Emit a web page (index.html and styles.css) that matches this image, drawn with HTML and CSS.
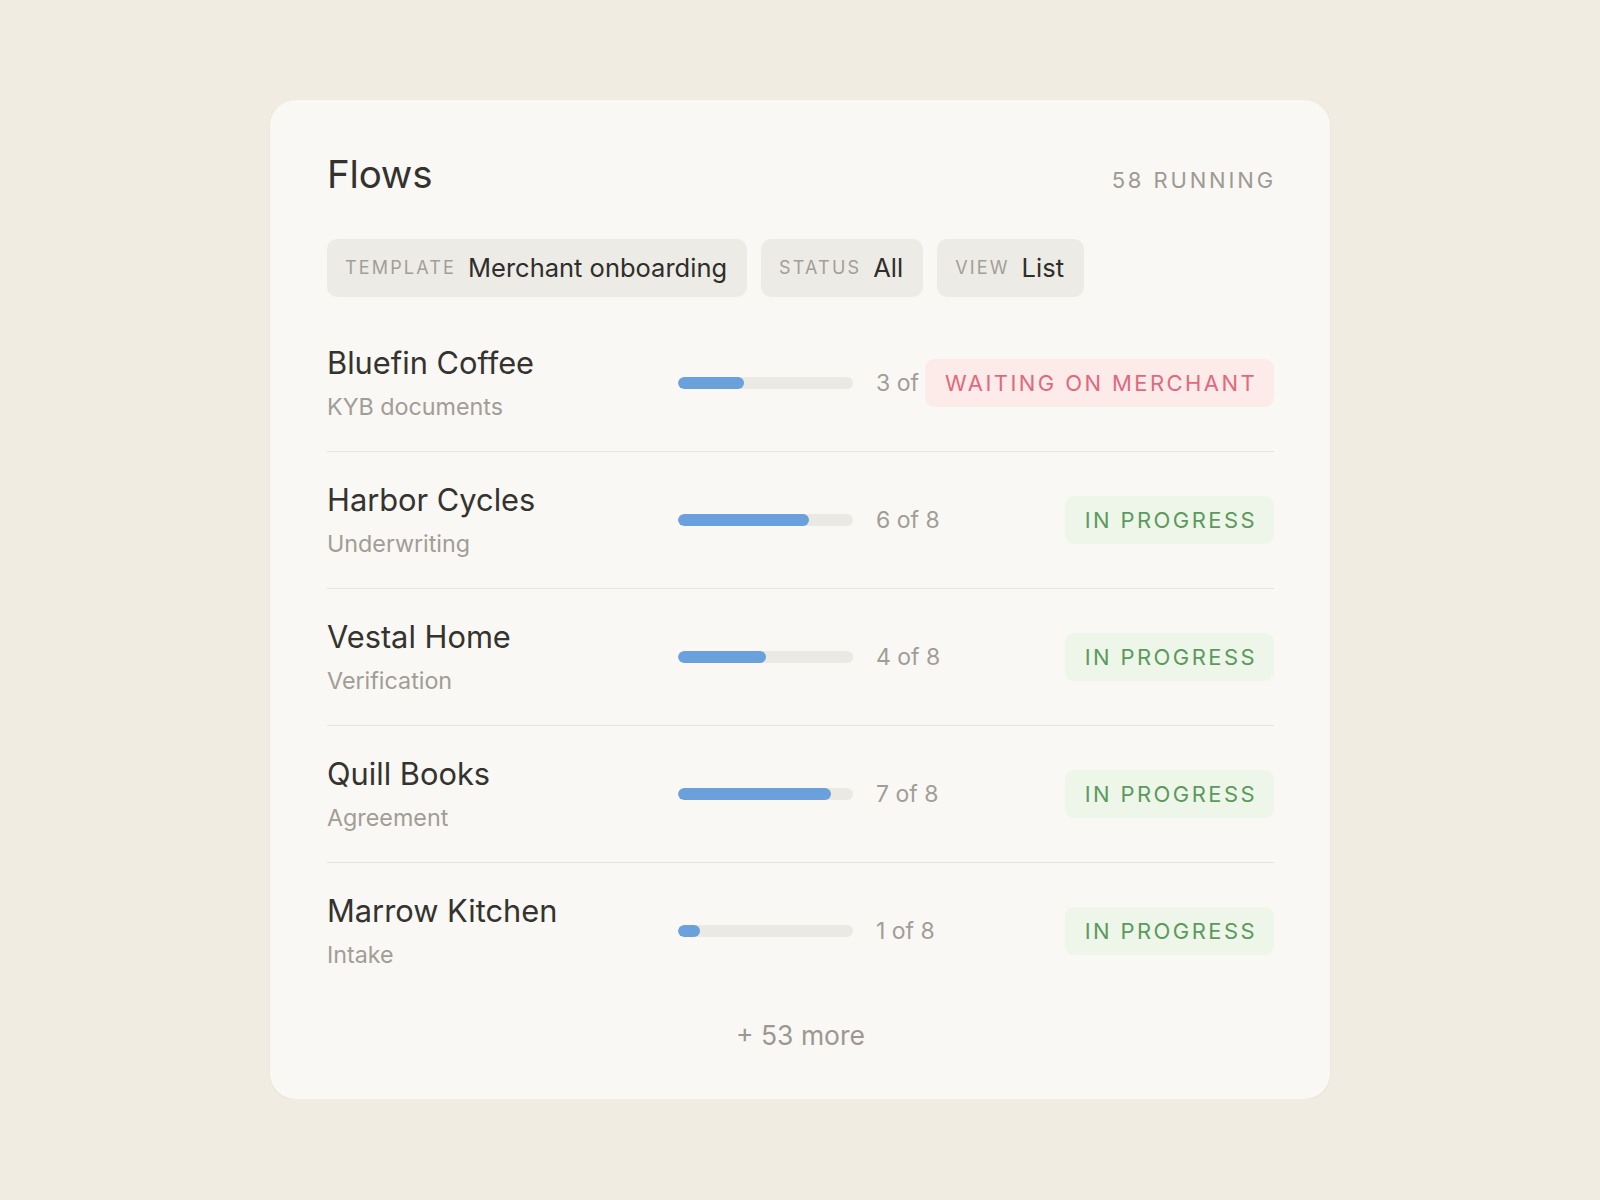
FILE: index.html
```html
<!DOCTYPE html>
<html lang="en">
<head>
    <meta charset="UTF-8">
    <meta name="viewport" content="width=device-width, initial-scale=1.0">
    <title>Flows</title>
    <link rel="stylesheet" href="styles.css">
</head>
<body>

    <div class="card">
        <div class="card-header">
            <h1 class="title">Flows</h1>
            <span class="running">58 running</span>
        </div>

        <!-- Filters -->
        <div class="filters">
            <div class="chip"><span class="chip-label">Template</span><span class="chip-value">Merchant onboarding</span></div>
            <div class="chip"><span class="chip-label">Status</span><span class="chip-value">All</span></div>
            <div class="chip"><span class="chip-label">View</span><span class="chip-value">List</span></div>
        </div>

        <!-- Flow rows -->
        <div class="flow-list">
            <div class="flow-row">
                <div class="flow-name">
                    <div class="merchant">Bluefin Coffee</div>
                    <div class="step">KYB documents</div>
                </div>
                <div class="progress"><div class="progress-fill" style="width: 37.5%"></div></div>
                <div class="count">3 of 8</div>
                <span class="badge badge-waiting">Waiting on merchant</span>
            </div>

            <div class="flow-row">
                <div class="flow-name">
                    <div class="merchant">Harbor Cycles</div>
                    <div class="step">Underwriting</div>
                </div>
                <div class="progress"><div class="progress-fill" style="width: 75%"></div></div>
                <div class="count">6 of 8</div>
                <span class="badge badge-progress">In progress</span>
            </div>

            <div class="flow-row">
                <div class="flow-name">
                    <div class="merchant">Vestal Home</div>
                    <div class="step">Verification</div>
                </div>
                <div class="progress"><div class="progress-fill" style="width: 50%"></div></div>
                <div class="count">4 of 8</div>
                <span class="badge badge-progress">In progress</span>
            </div>

            <div class="flow-row">
                <div class="flow-name">
                    <div class="merchant">Quill Books</div>
                    <div class="step">Agreement</div>
                </div>
                <div class="progress"><div class="progress-fill" style="width: 87.5%"></div></div>
                <div class="count">7 of 8</div>
                <span class="badge badge-progress">In progress</span>
            </div>

            <div class="flow-row">
                <div class="flow-name">
                    <div class="merchant">Marrow Kitchen</div>
                    <div class="step">Intake</div>
                </div>
                <div class="progress"><div class="progress-fill" style="width: 12.5%"></div></div>
                <div class="count">1 of 8</div>
                <span class="badge badge-progress">In progress</span>
            </div>
        </div>

        <div class="more">+ 53 more</div>
    </div>

</body>
</html>
```

FILE: styles.css
```css
body {
    margin: 0;
    background-color: #f1ece1;
    font-family: Inter, "Noto Sans", sans-serif;
    color: #33322e;
}

.card {
    box-sizing: border-box;
    width: 1060px;
    margin: 100px auto 0;
    padding: 51px 56px 48px 57px;
    background-color: #f9f8f4;
    border-radius: 26px;
    box-shadow: 0 1px 3px rgba(80, 70, 50, 0.05);
}

.card-header {
    display: flex;
    justify-content: space-between;
    align-items: baseline;
}

.title {
    margin: 0;
    font-size: 38.5px;
    font-weight: 400;
    line-height: 46px;
    letter-spacing: -0.2px;
    color: #33322e;
}

.running {
    font-size: 22px;
    line-height: 28px;
    letter-spacing: 0.13em;
    text-transform: uppercase;
    color: #9e9a94;
    margin-right: -2px;
}

/* Filters */
.filters {
    display: flex;
    gap: 14px;
    margin-top: 42px;
}

.chip {
    display: flex;
    align-items: center;
    gap: 12px;
    height: 58px;
    padding: 0 20px 0 18px;
    background-color: #edebe6;
    border-radius: 10px;
}

.chip-label {
    font-size: 18px;
    line-height: 22px;
    letter-spacing: 0.12em;
    text-transform: uppercase;
    color: #a29e98;
}

.chip-value {
    font-size: 25.5px;
    line-height: 32px;
    color: #2f2e2b;
}

/* Rows */
.flow-list {
    margin-top: 18px;
}

.flow-row {
    display: flex;
    align-items: center;
    padding: 30px 0;
    border-bottom: 1px solid #e7e4df;
}

.flow-row:last-child {
    border-bottom: none;
}

.flow-name {
    width: 328px;
    flex-shrink: 0;
    margin-right: 23px;
}

.merchant {
    font-size: 30.8px;
    line-height: 36px;
    color: #34332f;
}

.step {
    margin-top: 12px;
    font-size: 23.3px;
    line-height: 28px;
    color: #a19d97;
}

.progress {
    width: 175px;
    height: 12px;
    flex-shrink: 0;
    border-radius: 6px;
    background-color: #ebe9e4;
    overflow: hidden;
}

.progress-fill {
    height: 100%;
    border-radius: 6px;
    background-color: #6aa0dc;
}

.count {
    flex: 1;
    min-width: 0;
    margin: 0 6px 0 23px;
    overflow: hidden;
    white-space: nowrap;
    font-size: 23px;
    line-height: 30px;
    color: #a19d97;
}

.badge {
    flex-shrink: 0;
    display: flex;
    align-items: center;
    height: 48px;
    padding: 0 17px 0 20px;
    border-radius: 9px;
    font-size: 22px;
    letter-spacing: 0.11em;
    text-transform: uppercase;
}

.badge-waiting {
    color: #e06a7b;
    background-color: #fdebea;
}

.badge-progress {
    color: #5c9a5c;
    background-color: #edf6e9;
}

.more {
    padding-top: 20px;
    text-align: center;
    font-size: 26.5px;
    line-height: 32px;
    color: #9c9891;
}
```
